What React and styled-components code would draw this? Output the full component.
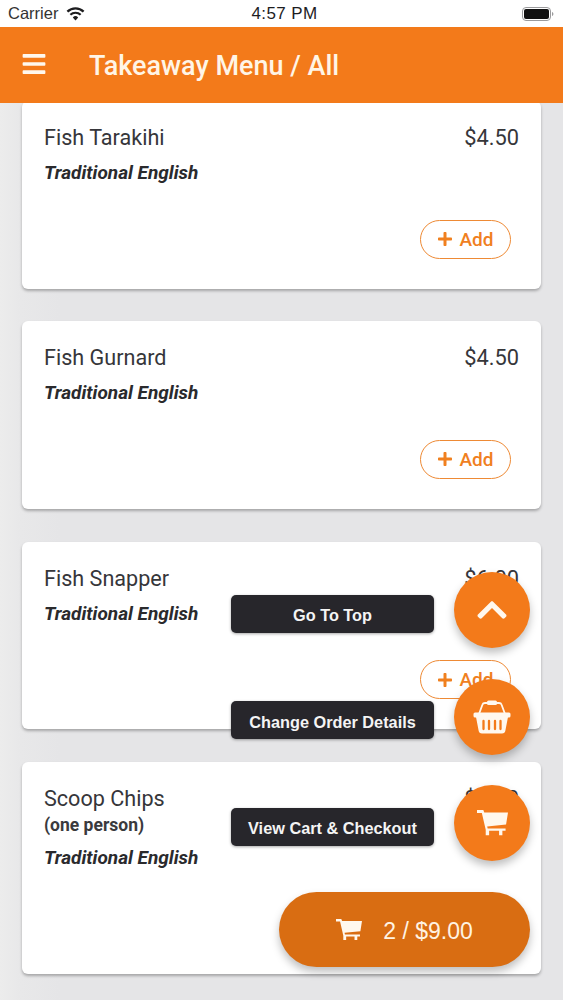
import React from 'react'
import styled, { createGlobalStyle } from 'styled-components'
import { FaBars, FaChevronUp, FaPlus } from 'react-icons/fa'

const items = [
  { name: 'Fish Tarakihi', price: '$4.50' },
  { name: 'Fish Gurnard', price: '$4.50' },
  { name: 'Fish Snapper', price: '$6.00' },
  { name: 'Scoop Chips', note: '(one person)', price: '$4.50' },
]

const WifiIcon = () => (
  <svg width="19" height="14" viewBox="0 0 18 14">
    <path d="M9 13.4 6.3 10.4a3.9 3.9 0 0 1 5.4 0Z" fill="#1d1d1f" />
    <path d="M4.6 8.6a6.4 6.4 0 0 1 8.8 0l1.5-1.6a8.6 8.6 0 0 0-11.8 0Z" fill="#1d1d1f" />
    <path d="M1.7 5.5a10.6 10.6 0 0 1 14.6 0L17.9 3.8a13 13 0 0 0-17.8 0Z" fill="#1d1d1f" />
  </svg>
)

const BatteryIcon = () => (
  <svg width="32" height="14" viewBox="0 0 32 14">
    <rect x="0.5" y="0.5" width="28" height="13" rx="3.5" fill="none" stroke="#9a9a9c" />
    <rect x="2" y="2" width="25" height="10" rx="2" fill="#111" />
    <path d="M30 5v4c.8-.3 1.4-1.1 1.4-2S30.800 5.300 30 5Z" fill="#9a9a9c" />
  </svg>
)

const BasketIcon = () => (
  <svg width="38" height="34" viewBox="0 0 38 34" fill="none">
    <path d="M6 14 9.500 4.500Q10 3 12 3h14q2 0 2.500 1.500L32 14" stroke="#fff8ee" strokeWidth="1.800" />
    <rect x="14" y="0.500" width="10" height="4.500" rx="1.500" fill="#fff8ee" />
    <rect x="0.500" y="12.500" width="37" height="5" rx="1.500" fill="#fff8ee" />
    <path d="M3 17h32l-2.600 13.500Q32 33.500 29 33.500H9Q6 33.500 5.600 30.500Z" fill="#fff8ee" />
    <path
      d="M10.500 21v8M16 21v8M22 21v8M27.500 21v8"
      stroke="#f37a1a"
      strokeWidth="2.300"
      strokeLinecap="round"
    />
  </svg>
)

const CartIcon = ({ width }) => (
  <svg width={width} viewBox="0 0 32 26" fill="#fff8ee">
    <path d="M0 0h6.500l1 2.500H32l-2 12.500-19.500 2L11 19h18.500v2.500h-3.300V26h-3.400v-4.500H12.500V26H9v-5.500L5 3H0Z" />
  </svg>
)

const App = () => {
  return (
    <Screen>
      <GlobalStyle />
      <StatusBar>
        <Carrier>
          Carrier <WifiIcon />
        </Carrier>
        <Clock>4:57 PM</Clock>
        <BatterySlot>
          <BatteryIcon />
        </BatterySlot>
      </StatusBar>
      <Header>
        <FaBars size={26} />
        <Title>Takeaway Menu / All</Title>
      </Header>
      <List>
        {items.map(item => (
          <Card key={item.name}>
            <TopRow>
              <Name>{item.name}</Name>
              <Price>{item.price}</Price>
            </TopRow>
            {item.note && <Note>{item.note}</Note>}
            <Style>Traditional English</Style>
            <AddButton>
              <FaPlus size={16} />
              Add
            </AddButton>
          </Card>
        ))}
      </List>
      <FabStack>
        <FabRow>
          <FabLabel>Go To Top</FabLabel>
          <Fab>
            <FaChevronUp size={34} />
          </Fab>
        </FabRow>
        <FabRow>
          <FabLabel>Change Order Details</FabLabel>
          <Fab>
            <BasketIcon />
          </Fab>
        </FabRow>
        <FabRow>
          <FabLabel>View Cart &amp; Checkout</FabLabel>
          <Fab>
            <CartIcon width={31} />
          </Fab>
        </FabRow>
      </FabStack>
      <CartPill>
        <CartIcon width={26} />
        <CartTotal>2 / $9.00</CartTotal>
      </CartPill>
    </Screen>
  )
}

export default App

const GlobalStyle = createGlobalStyle`
  html, body {
    margin: 0;
    padding: 0;
    background: #e5e5e7;
  }
`

const Screen = styled.div`
  position: relative;
  width: 563px;
  height: 1000px;
  overflow: hidden;
  background: linear-gradient(90deg, #ececec 0, #e8e8e9 20px, #e5e5e7 60px);
  font-family: Roboto, sans-serif;
`

const StatusBar = styled.div`
  position: relative;
  z-index: 3;
  display: flex;
  align-items: center;
  box-sizing: border-box;
  height: 27px;
  padding: 0 9px 0 8px;
  background: #fff;
  color: #1d1d1f;
  font-family: 'Liberation Sans', Arial, sans-serif;
`

const Carrier = styled.div`
  flex: 1;
  display: flex;
  align-items: center;
  gap: 8px;
  font-size: 16.5px;
  color: #333;
`

const Clock = styled.div`
  margin-left: 7px;
  font-size: 17px;
  letter-spacing: 0.4px;
`

const BatterySlot = styled.div`
  flex: 1;
  display: flex;
  justify-content: flex-end;
`

const Header = styled.header`
  position: relative;
  z-index: 2;
  display: flex;
  align-items: center;
  gap: 42px;
  box-sizing: border-box;
  height: 76px;
  padding: 0 21px 2px 21px;
  background: #f37a1a;
  color: #fff8ee;
`

const Title = styled.h1`
  margin: 4px 0 0;
  font-size: 27px;
  font-weight: 500;
  color: #fff5e6;
`

const List = styled.div`
  display: flex;
  flex-direction: column;
  gap: 32.67px;
  margin: -2px 22px 0;
`

const Card = styled.article`
  display: flex;
  flex-direction: column;
  box-sizing: border-box;
  padding: 23px 22px 30px;
  border-radius: 6px;
  background: #fff;
  box-shadow: 0 2px 3px rgba(0, 0, 0, 0.28);
`

const TopRow = styled.div`
  display: flex;
  justify-content: space-between;
  align-items: flex-start;
`

const Name = styled.div`
  font-size: 21.6px;
  line-height: 28px;
  color: #36363a;
`

const Price = styled.div`
  font-size: 21.8px;
  line-height: 28px;
  color: #36363a;
`

const Note = styled.div`
  margin-top: 1px;
  font-size: 17.5px;
  font-weight: 700;
  line-height: 23px;
  color: #3a3a3d;
`

const Style = styled.div`
  margin-top: 9px;
  font-size: 19px;
  font-weight: 700;
  font-style: italic;
  line-height: 24px;
  color: #2a2a2d;
`

const AddButton = styled.button`
  display: flex;
  align-items: center;
  justify-content: center;
  gap: 6px;
  align-self: flex-end;
  box-sizing: border-box;
  width: 91px;
  height: 39px;
  margin: 34.67px 8px 0 0;
  padding: 0;
  border: 1.8px solid #ee8a35;
  border-radius: 20px;
  background: #fff;
  color: #f0801f;
  font-family: Roboto, sans-serif;
  font-size: 19px;
  font-weight: 500;
`

const FabStack = styled.div`
  position: absolute;
  z-index: 4;
  top: 572px;
  right: 33px;
  display: flex;
  flex-direction: column;
  gap: 30.5px;
`

const FabRow = styled.div`
  display: flex;
  align-items: center;
  gap: 20px;
`

const FabLabel = styled.div`
  display: flex;
  align-items: center;
  justify-content: center;
  box-sizing: border-box;
  width: 203px;
  height: 38px;
  margin-top: 7px;
  padding-top: 4px;
  border-radius: 5px;
  background: #27262b;
  box-shadow: 0 1px 3px rgba(0, 0, 0, 0.35);
  color: #f4f4f4;
  font-family: 'Liberation Sans', Arial, sans-serif;
  font-size: 16.3px;
  font-weight: 700;
`

const Fab = styled.button`
  display: flex;
  align-items: center;
  justify-content: center;
  width: 76px;
  height: 76px;
  padding: 0;
  border: 0;
  border-radius: 50%;
  background: #f37a1a;
  box-shadow: 0 5px 8px rgba(0, 0, 0, 0.25);
  color: #fff8ee;
`

const CartPill = styled.button`
  position: absolute;
  z-index: 4;
  top: 892px;
  left: 279px;
  display: flex;
  align-items: center;
  justify-content: center;
  gap: 21px;
  width: 251px;
  height: 75px;
  padding: 0;
  border: 0;
  border-radius: 38px;
  background: #d96d12;
  box-shadow: 0 5px 8px rgba(0, 0, 0, 0.25);
  color: #fff3e2;
  font-family: 'Liberation Sans', Arial, sans-serif;
  font-size: 23px;
`

const CartTotal = styled.span`
  margin-top: 3px;
`
